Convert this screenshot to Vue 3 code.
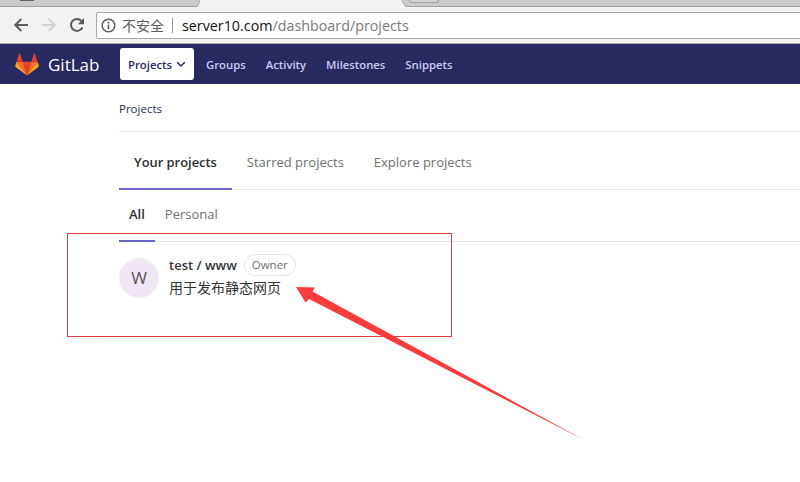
<template>
  <div class="page">
    <!-- browser chrome -->
    <div class="tabstrip">
      <div class="tab-left"><i class="favicon"></i></div>
      <svg class="tab-active" width="212" height="7" viewBox="0 0 212 7">
        <path d="M0 7 3 0H205L209 7z" fill="#f2f2f2"/>
        <path d="M0 6.500H.5L3 .5M205 .5 208.500 6.500H212" fill="none" stroke="#a3a3a3"/>
      </svg>
      <div class="tab-right"><i class="new-tab"></i></div>
    </div>
    <div class="toolbar">
      <button class="tool" aria-label="back">
        <svg width="16" height="16" viewBox="0 0 16 16"><path d="M15 8H2.500M8.300 2 2.300 8l6 6" fill="none" stroke="#5a5a5a" stroke-width="2"/></svg>
      </button>
      <button class="tool" aria-label="forward">
        <svg width="16" height="16" viewBox="0 0 16 16"><path d="M1 8h12.500M7.700 2l6 6-6 6" fill="none" stroke="#d4d4d4" stroke-width="2"/></svg>
      </button>
      <button class="tool" aria-label="reload">
        <svg width="16" height="16" viewBox="0 0 16 16"><path d="M13.400 10.500A6 6 0 1 1 12.300 3.700" fill="none" stroke="#5a5a5a" stroke-width="2"/><path d="M15 1v6.200H8.800z" fill="#5a5a5a"/></svg>
      </button>
      <div class="omnibox">
        <svg class="info" width="15" height="15" viewBox="0 0 15 15"><circle cx="7.500" cy="7.500" r="6.300" fill="none" stroke="#5a5a5a" stroke-width="1.500"/><path d="M6.700 6.500h1.600v4.700H6.700zM6.700 3.800h1.600v1.600H6.700z" fill="#5a5a5a"/></svg>
        <span class="insecure">不安全</span>
        <i class="sep"></i>
        <span class="url">server10.com<span class="url-path">/dashboard/projects</span></span>
      </div>
    </div>

    <!-- gitlab nav -->
    <nav class="topnav">
      <div class="brand">
        <svg class="logo" width="24" height="23" viewBox="0 0 25 24">
          <path d="M12.500 23.500 17 9.200H8z" fill="#e24329"/>
          <path d="M12.500 23.500 8 9.200H1.600z" fill="#fc6d26"/>
          <path d="M1.600 9.200.2 13.400c-.1.400 0 .8.400 1.100l11.900 9z" fill="#fca326"/>
          <path d="M1.600 9.200H8L5.200.6c-.1-.4-.7-.4-.9 0z" fill="#e24329"/>
          <path d="M12.500 23.500 17 9.200h6.400z" fill="#fc6d26"/>
          <path d="M23.400 9.200l1.400 4.200c.1.400 0 .8-.4 1.100l-11.900 9z" fill="#fca326"/>
          <path d="M23.400 9.200H17L19.800.6c.1-.4.7-.4.900 0z" fill="#e24329"/>
        </svg>
        <span class="brand-name">GitLab</span>
      </div>
      <a class="nav-item active">Projects
        <svg width="10" height="7" viewBox="0 0 10 7"><path d="M1.200 1.300 5 5l3.800-3.700" fill="none" stroke="#292961" stroke-width="1.600"/></svg>
      </a>
      <a v-for="n in navItems" :key="n" class="nav-item">{{ n }}</a>
    </nav>

    <!-- content -->
    <main class="content">
      <div class="breadcrumb">Projects</div>
      <div class="tabs main-tabs">
        <a v-for="(t, i) in mainTabs" :key="t" class="tab" :class="{ on: i === 0 }">{{ t }}</a>
      </div>
      <div class="tabs sub-tabs">
        <a v-for="(t, i) in subTabs" :key="t" class="tab" :class="{ on: i === 0 }">{{ t }}</a>
      </div>
      <div class="project">
        <div class="avatar">W</div>
        <div class="project-info">
          <div class="title-row">
            <span class="project-name">test / www</span>
            <span class="role">Owner</span>
          </div>
          <div class="desc">用于发布静态网页</div>
        </div>
      </div>
    </main>

    <!-- screenshot annotations -->
    <div class="mark-box"></div>
    <svg class="mark-arrow" width="800" height="482" viewBox="0 0 800 482">
      <path d="M296 287 315 287.500 312.500 291.500 585 440.500 309 299 305.500 302.500z" fill="#fb3c3c"/>
    </svg>
  </div>
</template>

<script setup>
const navItems = ['Groups', 'Activity', 'Milestones', 'Snippets']
const mainTabs = ['Your projects', 'Starred projects', 'Explore projects']
const subTabs = ['All', 'Personal']
</script>

<style>
html, body { margin: 0; background: #fff; }
</style>

<style scoped>
.page {
  position: relative;
  width: 800px;
  height: 482px;
  overflow: hidden;
  background: #fff;
  font-family: "Open Sans", "Noto Sans CJK SC", sans-serif;
}
.tabstrip {
  display: flex;
  height: 7px;
  background: #cbcbcb;
}
.tab-left {
  width: 197px;
  border-bottom: 1px solid #a3a3a3;
  box-sizing: border-box;
  padding-left: 20px;
}
.favicon {
  display: block;
  width: 14px;
  height: 1px;
  background: #5c6a7a;
}
.tab-active {
  display: block;
  flex: none;
}
.tab-right {
  flex: 1;
  border-bottom: 1px solid #a3a3a3;
  box-sizing: border-box;
}
.new-tab {
  display: block;
  width: 28px;
  height: 2px;
  background: #d2d2d2;
  border: 1px solid #a3a3a3;
  border-top: 0;
  box-sizing: content-box;
  border-radius: 0 0 3px 3px;
}
.toolbar {
  display: flex;
  align-items: center;
  height: 36px;
  padding-left: 13px;
  background: #f2f2f2;
  border-bottom: 1px solid #a8a8a8;
}
.tool {
  display: flex;
  align-items: center;
  justify-content: center;
  width: 16px;
  height: 16px;
  padding: 0;
  margin-right: 12px;
  border: 0;
  background: none;
}
.omnibox {
  display: flex;
  align-items: center;
  flex: 1;
  height: 27px;
  margin-left: -1px;
  margin-right: -4px;
  padding-left: 4px;
  background: #fff;
  border: 1px solid #a9a9a9;
  border-radius: 2px;
  box-sizing: border-box;
}
.insecure {
  margin-left: 6px;
  font-size: 14px;
  color: #5a5a5a;
}
.sep {
  width: 1px;
  height: 15px;
  margin: 0 9px 0 8px;
  background: #9a9a9a;
}
.url {
  font-size: 14.300px;
  color: #111;
}
.url-path { color: #7a7a7a; }
.topnav {
  display: flex;
  align-items: center;
  height: 40px;
  background: #292961;
}
.brand {
  display: flex;
  align-items: center;
  width: 120px;
  padding-left: 15px;
  box-sizing: border-box;
}
.brand-name {
  margin-left: 9px;
  font-size: 17px;
  color: #fff;
}
.nav-item {
  display: flex;
  align-items: center;
  height: 32px;
  margin-right: 20px;
  font-size: 11.300px;
  font-weight: 600;
  color: #c8c8f0;
}
.nav-item.active {
  gap: 4px;
  width: 74px;
  margin-right: 12px;
  justify-content: center;
  background: #fff;
  border-radius: 3px;
  color: #292961;
}
.content {
  padding-left: 119px;
}
.breadcrumb {
  height: 47px;
  line-height: 50px;
  font-size: 11.500px;
  color: #2e2e4e;
  border-bottom: 1px solid #e5e5e5;
}
.tabs {
  display: flex;
  border-bottom: 1px solid #e5e5e5;
}
.tab {
  position: relative;
  display: block;
  color: #707070;
}
.tab.on {
  color: #2e2e2e;
  font-weight: 600;
}
.tab.on::after {
  content: "";
  position: absolute;
  left: 0;
  right: 0;
  bottom: -1px;
  height: 2px;
  background: #6666c4;
}
.main-tabs {
  height: 57px;
}
.main-tabs .tab {
  padding: 0 15px;
  line-height: 61px;
  font-size: 13px;
}
.main-tabs .tab.on {
  font-size: 12.900px;
}
.sub-tabs {
  height: 51px;
}
.sub-tabs .tab {
  padding: 0 10px;
  line-height: 49px;
  font-size: 13px;
}
.project {
  display: flex;
  padding-top: 16px;
}
.avatar {
  width: 40px;
  height: 40px;
  margin-right: 10px;
  line-height: 38px;
  text-align: center;
  font-size: 17px;
  color: #555;
  background: #f1e6f5;
  border-radius: 50%;
  border: 1px solid #eee;
  box-sizing: border-box;
}
.title-row {
  display: flex;
  align-items: center;
  margin-top: -4px;
  height: 22px;
}
.project-name {
  font-size: 13px;
  font-weight: 600;
  color: #333;
}
.role {
  margin-left: 7px;
  padding: 0 7px;
  height: 20px;
  line-height: 20px;
  font-size: 11.500px;
  color: #707070;
  border: 1px solid #e5e5e5;
  border-radius: 11px;
}
.desc {
  margin-top: 2px;
  font-size: 14px;
  line-height: 20px;
  color: #333;
}
.mark-box {
  position: absolute;
  left: 67px;
  top: 233px;
  width: 385px;
  height: 104px;
  border: 1px solid #e63c3c;
  box-sizing: border-box;
}
.mark-arrow {
  position: absolute;
  left: 0;
  top: 0;
}
</style>
